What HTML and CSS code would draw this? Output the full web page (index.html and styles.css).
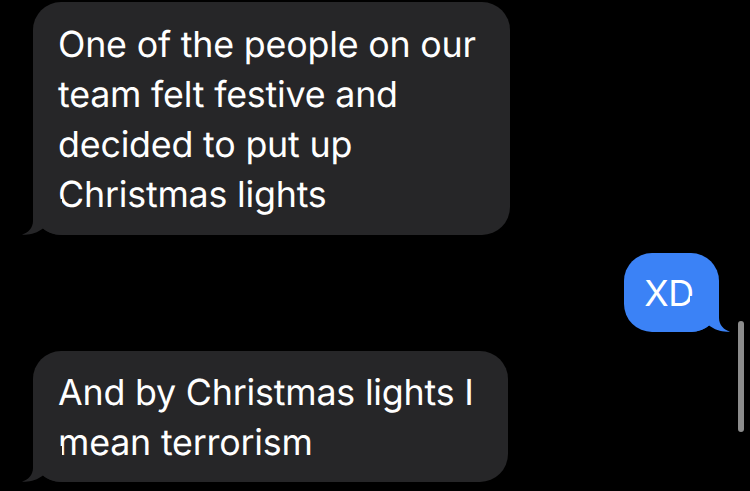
FILE: index.html
```html
<!DOCTYPE html>
<html>
<head>
<meta charset="utf-8">
<link rel="stylesheet" href="styles.css">
</head>
<body>
<div class="thread">
  <div class="row row-in first">
    <div class="bubble in b1"><span class="text">One of the people on our team felt festive and decided to put up Christmas lights</span><svg class="tail tail-in" width="40" height="36" viewBox="0 0 40 36"><path d="M11 0 L11 22 C11 29 6 34 0 35.5 C7 36.5 15 34 21 29.5 C25 33 31 36 40 36 L40 0 Z"/></svg></div>
  </div>
  <div class="row row-out">
    <div class="bubble out b2"><span class="text">XD</span><svg class="tail tail-out" width="40" height="36" viewBox="0 0 40 36"><path d="M29 0 L29 22 C29 29 34 34 40 35.5 C33 36.5 25 34 19 29.5 C15 33 9 36 0 36 L0 0 Z"/></svg></div>
  </div>
  <div class="row row-in">
    <div class="bubble in b3"><span class="text">And by Christmas lights I mean terrorism</span><svg class="tail tail-in" width="40" height="36" viewBox="0 0 40 36"><path d="M11 0 L11 22 C11 29 6 34 0 35.5 C7 36.5 15 34 21 29.5 C25 33 31 36 40 36 L40 0 Z"/></svg></div>
  </div>
  <div class="scrollbar"></div>
</div>
</body>
</html>
```
FILE: styles.css
```css
html, body {
  margin: 0;
  padding: 0;
  background: #000;
}
body {
  width: 750px;
  height: 491px;
  overflow: hidden;
  font-family: Inter, "Open Sans", "Liberation Sans", sans-serif;
  color: #fff;
  text-rendering: geometricPrecision;
  -webkit-font-smoothing: antialiased;
}
.thread {
  position: relative;
  height: 491px;
  display: flex;
  flex-direction: column;
  padding-top: 2px;
  box-sizing: border-box;
}
.row {
  display: flex;
}
.row-in {
  justify-content: flex-start;
  padding-left: 33px;
}
.row-out {
  justify-content: flex-end;
  padding-right: 31px;
  margin-top: 18px;
}
.row-out + .row-in {
  margin-top: 19px;
}
.bubble {
  position: relative;
  font-size: 35.8px;
  line-height: 50px;
  letter-spacing: -0.2px;
  border-radius: 28px;
  box-sizing: border-box;
}
.text {
  display: block;
}
.in {
  background: #262628;
}
.out {
  background: #3b82f6;
}
.tail {
  position: absolute;
  bottom: 0;
  display: block;
}
.tail-in {
  left: -11px;
  fill: #262628;
}
.tail-out {
  right: -11px;
  fill: #3b82f6;
}
.b1 {
  width: 477px;
  padding: 17px 20px 16px 25px;
}
.b2 {
  padding: 15px 25px 14px 20px;
}
.b3 {
  width: 475px;
  padding: 16px 20px 15px 25px;
}
.scrollbar {
  position: absolute;
  left: 738px;
  top: 321px;
  width: 6px;
  height: 111px;
  border-radius: 3px;
  background: #8c8c8c;
}
```
